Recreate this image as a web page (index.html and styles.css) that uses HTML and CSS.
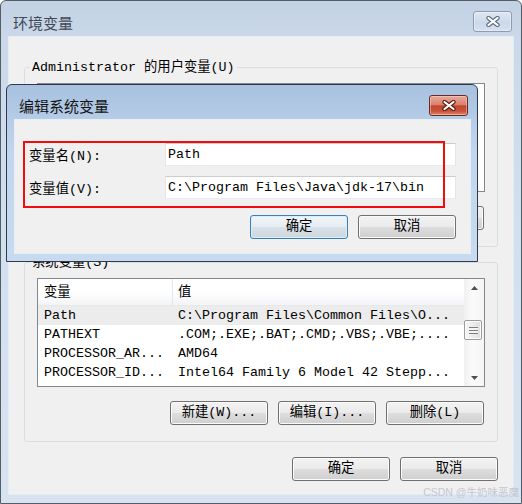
FILE: index.html
```html
<!DOCTYPE html>
<html lang="zh-CN">
<head>
<meta charset="utf-8">
<title>环境变量</title>
<link rel="stylesheet" href="styles.css">
</head>
<body>
<div class="window">
  <div class="titlebar">
    <span class="title">环境变量</span>
    <button class="close close-inactive" aria-label="关闭">
      <svg width="14" height="11" viewBox="0 0 14 11"><path d="M2.5 2 L11.5 9 M11.5 2 L2.5 9" stroke="#5d6d82" stroke-width="4.4" stroke-linecap="round"/><path d="M2.5 2 L11.5 9 M11.5 2 L2.5 9" stroke="#ffffff" stroke-width="2.2" stroke-linecap="round"/></svg>
    </button>
  </div>
  <div class="client">
    <div class="group">
      <div class="group-label">Administrator 的用户变量(U)</div>
      <div class="listbox">
        <div class="lb-main"></div>
      </div>
      <div class="btn-row" aria-hidden="true">
        <span class="btn"></span>
        <span class="btn"></span>
        <span class="btn"></span>
      </div>
    </div>
    <div class="group group-sys">
      <div class="group-label">系统变量(S)</div>
      <div class="listbox">
        <div class="lb-main">
          <div class="lb-header"><span class="cell c1">变量</span><span class="cell">值</span></div>
          <div class="lb-row hot"><span class="cell c1">Path</span><span class="cell">C:\Program Files\Common Files\O...</span></div>
          <div class="lb-row"><span class="cell c1">PATHEXT</span><span class="cell">.COM;.EXE;.BAT;.CMD;.VBS;.VBE;....</span></div>
          <div class="lb-row"><span class="cell c1">PROCESSOR_AR...</span><span class="cell">AMD64</span></div>
          <div class="lb-row"><span class="cell c1">PROCESSOR_ID...</span><span class="cell">Intel64 Family 6 Model 42 Stepp...</span></div>
        </div>
        <div class="scrollbar">
          <div class="sb-btn"><svg width="7" height="4" viewBox="0 0 7 4"><polygon points="0,4 3.5,0 7,4" fill="#4f4f4f"/></svg></div>
          <div class="sb-track"><div class="sb-thumb"><span class="grip"></span></div></div>
          <div class="sb-btn"><svg width="7" height="4" viewBox="0 0 7 4"><polygon points="0,0 7,0 3.5,4" fill="#4f4f4f"/></svg></div>
        </div>
      </div>
      <div class="btn-row">
        <button class="btn">新建(W)...</button>
        <button class="btn">编辑(I)...</button>
        <button class="btn">删除(L)</button>
      </div>
    </div>
    <div class="btn-row footer">
      <button class="btn">确定</button>
      <button class="btn">取消</button>
    </div>
  </div>

  <div class="dialog">
    <div class="titlebar dlg-titlebar">
      <span class="title dlg-title">编辑系统变量</span>
      <button class="close close-active" aria-label="关闭">
        <svg width="14" height="11" viewBox="0 0 14 11"><path d="M2.5 2 L11.5 9 M11.5 2 L2.5 9" stroke="#5a1d14" stroke-width="4.4" stroke-linecap="round"/><path d="M2.5 2 L11.5 9 M11.5 2 L2.5 9" stroke="#ffffff" stroke-width="2.2" stroke-linecap="round"/></svg>
      </button>
    </div>
    <div class="dlg-client">
      <div class="form">
        <label class="flabel">变量名(N):</label>
        <div class="input">Path</div>
        <label class="flabel">变量值(V):</label>
        <div class="input">C:\Program Files\Java\jdk-17\bin</div>
      </div>
      <div class="btn-row dlg-buttons">
        <button class="btn btn-default">确定</button>
        <button class="btn">取消</button>
      </div>
    </div>
  </div>

  <div class="highlight"></div>
  <div class="watermark">CSDN @牛奶味恶魔</div>
</div>
</body>
</html>
```

FILE: styles.css
```css
* { box-sizing: border-box; }
html, body { margin: 0; padding: 0; }
body {
  width: 522px;
  height: 504px;
  overflow: hidden;
  background: #ffffff;
  font-family: "Liberation Mono", "Noto Sans CJK SC", monospace;
  font-size: 13.33px;
  color: #000;
}

.window {
  position: relative;
  width: 522px;
  height: 504px;
  border: 1px solid #545c68;
  border-radius: 6px 6px 0 0;
  background: linear-gradient(180deg, #c2d1e3 0px, #cad8e9 36px, #d2dfee 220px, #d7e3f1 504px);
  display: flex;
  flex-direction: column;
}

.titlebar {
  height: 36px;
  flex: none;
  display: flex;
  align-items: flex-start;
  justify-content: space-between;
}
.title {
  font-family: "Noto Sans CJK SC", sans-serif;
  font-size: 15px;
  line-height: 20px;
  padding: 12px 0 0 12px;
  color: #424a55;
}

.close {
  width: 39px;
  height: 21px;
  margin: 10px 9px 0 0;
  padding: 0;
  border-radius: 3px;
  display: flex;
  align-items: center;
  justify-content: center;
}
.close-inactive {
  border: 1px solid #8d9cb0;
  background: linear-gradient(180deg, rgba(255,255,255,0.45), rgba(255,255,255,0.15) 50%, rgba(255,255,255,0.05) 51%, rgba(255,255,255,0.25));
  box-shadow: inset 0 0 0 1px rgba(255,255,255,0.35);
}
.close-active {
  border: 1px solid #6b2b22;
  background: linear-gradient(180deg, #e9ab9b 0%, #d9806c 45%, #c4472e 52%, #c8523a 80%, #de8a6f 100%);
  box-shadow: inset 0 0 0 1px rgba(255,220,210,0.45);
}

.client {
  flex: none;
  height: 457px;
  margin: 0 8px;
  background: #f0f0f0;
  box-shadow: 0 0 0 1px #e4ecf5;
  display: flex;
  flex-direction: column;
  padding: 30px 15px 0 15px;
}

.group {
  height: 180px;
  border: 1px solid #d5dfe5;
  border-radius: 3px;
  padding: 0 12px 16px 12px;
  display: flex;
  flex-direction: column;
  flex: none;
}
.group-sys { margin-top: 15px; }
.group-label {
  align-self: flex-start;
  height: 14px;
  line-height: 16px;
  margin: -8px 0 0 -7px;
  padding: 0 2px;
  background: #f0f0f0;
  white-space: nowrap;
}

.listbox {
  margin-top: 9px;
  height: 109px;
  border: 1px solid #828790;
  background: #fff;
  display: flex;
  flex: none;
}
.lb-main { flex: 1; min-width: 0; }
.lb-header {
  display: grid;
  grid-template-columns: 135px 1fr;
  height: 27px;
  line-height: 27px;
  background: linear-gradient(180deg, #ffffff 0%, #ffffff 45%, #f3f4f6 100%);
  border-bottom: 1px solid #e6e8eb;
}
.lb-row {
  display: grid;
  grid-template-columns: 135px 1fr;
  height: 19px;
  line-height: 19px;
}
.lb-row.hot { background: #ececec; }
.cell {
  padding-left: 5px;
  white-space: nowrap;
  overflow: hidden;
}
.cell.c1 { padding-left: 6px; }
.lb-header .cell.c1 { border-right: 1px solid #e3e6ea; }

.scrollbar {
  width: 20px;
  flex: none;
  display: flex;
  flex-direction: column;
  background: linear-gradient(90deg, #f0f0f0, #fafafa 40%, #f6f6f6);
}
.sb-btn {
  height: 17px;
  display: flex;
  align-items: center;
  justify-content: center;
}
.sb-track { flex: 1; padding-top: 24px; }
.sb-thumb {
  height: 20px;
  margin: 0 2px 0 0;
  border: 1px solid #9b9b9b;
  border-radius: 2px;
  background: linear-gradient(90deg, #f6f6f6, #e9e9e9 60%, #dedede);
  box-shadow: inset 0 0 0 1px #fbfbfb;
  display: flex;
  align-items: center;
  justify-content: center;
}
.grip {
  width: 9px;
  height: 7px;
  background: repeating-linear-gradient(180deg, #7c7c7c 0 1px, #f4f4f4 1px 3px);
}

.btn-row {
  display: flex;
  justify-content: flex-end;
  gap: 10px;
  margin-top: 14px;
  padding-right: 1px;
  flex: none;
}
.footer { margin-top: 15px; padding-right: 0; }

.btn {
  display: block;
  width: 98px;
  height: 24px;
  padding: 0;
  border: 1px solid #707070;
  border-radius: 3px;
  background: linear-gradient(180deg, #f2f2f2 0%, #ebebeb 48%, #dddddd 52%, #cfcfcf 100%);
  box-shadow: inset 0 0 0 1px #fbfbfb;
  font-family: "Liberation Mono", "Noto Sans CJK SC", monospace;
  font-size: 13.33px;
  color: #000;
  line-height: 22px;
  white-space: nowrap;
}
.btn-default {
  border-color: #3c7fb1;
  background: linear-gradient(180deg, #f0f5f8 0%, #e6edf2 48%, #d8e1e7 52%, #cdd7de 100%);
  box-shadow: inset 0 0 0 1px #d8eefa;
}

.dialog {
  position: absolute;
  left: 5px;
  top: 83px;
  width: 472px;
  height: 178px;
  border: 1px solid #2f3a4a;
  border-radius: 6px 6px 0 0;
  background: linear-gradient(180deg, #a7c1df 0px, #b6cce7 35px, #c2d6ed 70px, #c8daf0 100%);
  display: flex;
  flex-direction: column;
}
.dlg-titlebar { height: 35px; }
.dlg-title { padding-top: 11px; color: #151515; }

.dlg-client {
  flex: none;
  height: 133px;
  margin: 0 7px 0 8px;
  background: #f0f0f0;
  box-shadow: 0 0 0 1px #e6eef8;
  padding: 23px 14px 14px 14px;
  display: flex;
  flex-direction: column;
}
.form {
  display: grid;
  grid-template-columns: 136px 1fr;
  row-gap: 10px;
  align-items: center;
}
.flabel { white-space: nowrap; }
.input {
  height: 23px;
  line-height: 21px;
  border: 1px solid;
  border-color: #c9ccd2 #e2e5ea #e8ecf0 #e2e5ea;
  background: #fff;
  padding: 0 2px;
  white-space: nowrap;
  overflow: hidden;
}
.dlg-buttons { margin-top: 16px; padding-right: 0; }

.highlight {
  position: absolute;
  left: 22px;
  top: 140px;
  width: 422px;
  height: 67px;
  border: 2px solid #f20d0d;
}

.watermark {
  position: absolute;
  right: 2px;
  bottom: 5px;
  font-family: "Liberation Sans", "Noto Sans CJK SC", sans-serif;
  font-size: 10.5px;
  line-height: 12px;
  color: #c3c8d0;
  white-space: nowrap;
}
```
